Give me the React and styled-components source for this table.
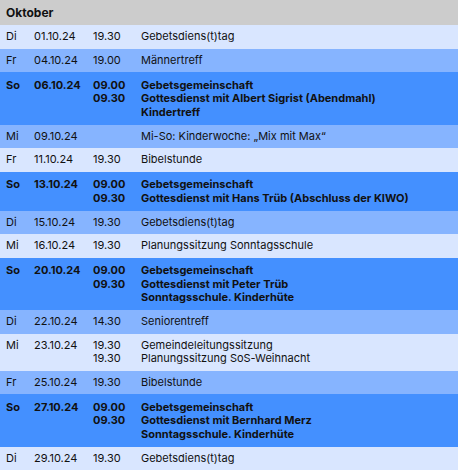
import React from 'react'
import styled, { createGlobalStyle } from 'styled-components'

const GlobalStyle = createGlobalStyle`
  html, body {
    margin: 0;
    padding: 0;
    background: #ffffff;
  }
  body {
    font-family: Inter, 'Open Sans', sans-serif;
    color: #111;
  }
`

const tones = {
  light: '#d9e6ff',
  medium: '#86b4ff',
  strong: '#4490ff',
}

const Calendar = styled.div`
  width: 458px;
  overflow: hidden;
`

const MonthHeader = styled.div`
  height: 25px;
  background: #cccccc;
  padding-left: 6px;
  display: flex;
  align-items: center;
  font-size: 12px;
  font-weight: 700;
`

const Row = styled.div`
  display: grid;
  grid-template-columns: 28px 59px 48px 1fr;
  padding: ${p => (p.$bold ? '6.5px 0 5.5px 6px' : '5px 0 5px 6px')};
  background: ${p => tones[p.$tone]};
  font-size: 11px;
  line-height: 13.5px;
  font-weight: ${p => (p.$bold ? 700 : 400)};
`

const Cell = styled.div`
  white-space: nowrap;
`

const Lines = styled.div`
  display: flex;
  flex-direction: column;
`

const events = [
  { day: 'Di', date: '01.10.24', times: ['19.30'], items: ['Gebetsdiens(t)tag'], tone: 'light' },
  { day: 'Fr', date: '04.10.24', times: ['19.00'], items: ['Männertreff'], tone: 'medium' },
  {
    day: 'So', date: '06.10.24', times: ['09.00', '09.30'], tone: 'strong', bold: true,
    items: ['Gebetsgemeinschaft', 'Gottesdienst mit Albert Sigrist (Abendmahl)', 'Kindertreff'],
  },
  { day: 'Mi', date: '09.10.24', times: [], items: ['Mi-So: Kinderwoche: „Mix mit Max“'], tone: 'medium' },
  { day: 'Fr', date: '11.10.24', times: ['19.30'], items: ['Bibelstunde'], tone: 'light' },
  {
    day: 'So', date: '13.10.24', times: ['09.00', '09.30'], tone: 'strong', bold: true,
    items: ['Gebetsgemeinschaft', 'Gottesdienst mit Hans Trüb (Abschluss der KIWO)'],
  },
  { day: 'Di', date: '15.10.24', times: ['19.30'], items: ['Gebetsdiens(t)tag'], tone: 'medium' },
  { day: 'Mi', date: '16.10.24', times: ['19.30'], items: ['Planungssitzung Sonntagsschule'], tone: 'light' },
  {
    day: 'So', date: '20.10.24', times: ['09.00', '09.30'], tone: 'strong', bold: true,
    items: ['Gebetsgemeinschaft', 'Gottesdienst mit Peter Trüb', 'Sonntagsschule. Kinderhüte'],
  },
  { day: 'Di', date: '22.10.24', times: ['14.30'], items: ['Seniorentreff'], tone: 'medium' },
  {
    day: 'Mi', date: '23.10.24', times: ['19.30', '19.30'], tone: 'light',
    items: ['Gemeindeleitungssitzung', 'Planungssitzung SoS-Weihnacht'],
  },
  { day: 'Fr', date: '25.10.24', times: ['19.30'], items: ['Bibelstunde'], tone: 'medium' },
  {
    day: 'So', date: '27.10.24', times: ['09.00', '09.30'], tone: 'strong', bold: true,
    items: ['Gebetsgemeinschaft', 'Gottesdienst mit Bernhard Merz', 'Sonntagsschule. Kinderhüte'],
  },
  { day: 'Di', date: '29.10.24', times: ['19.30'], items: ['Gebetsdiens(t)tag'], tone: 'light' },
]

export default function App() {
  return (
    <>
      <GlobalStyle />
      <Calendar>
        <MonthHeader>Oktober</MonthHeader>
        {events.map((e, i) => (
          <Row key={i} $tone={e.tone} $bold={e.bold}>
            <Cell>{e.day}</Cell>
            <Cell>{e.date}</Cell>
            <Lines>
              {e.times.map((t, j) => <Cell key={j}>{t}</Cell>)}
            </Lines>
            <Lines>
              {e.items.map((t, j) => <Cell key={j}>{t}</Cell>)}
            </Lines>
          </Row>
        ))}
      </Calendar>
    </>
  )
}
